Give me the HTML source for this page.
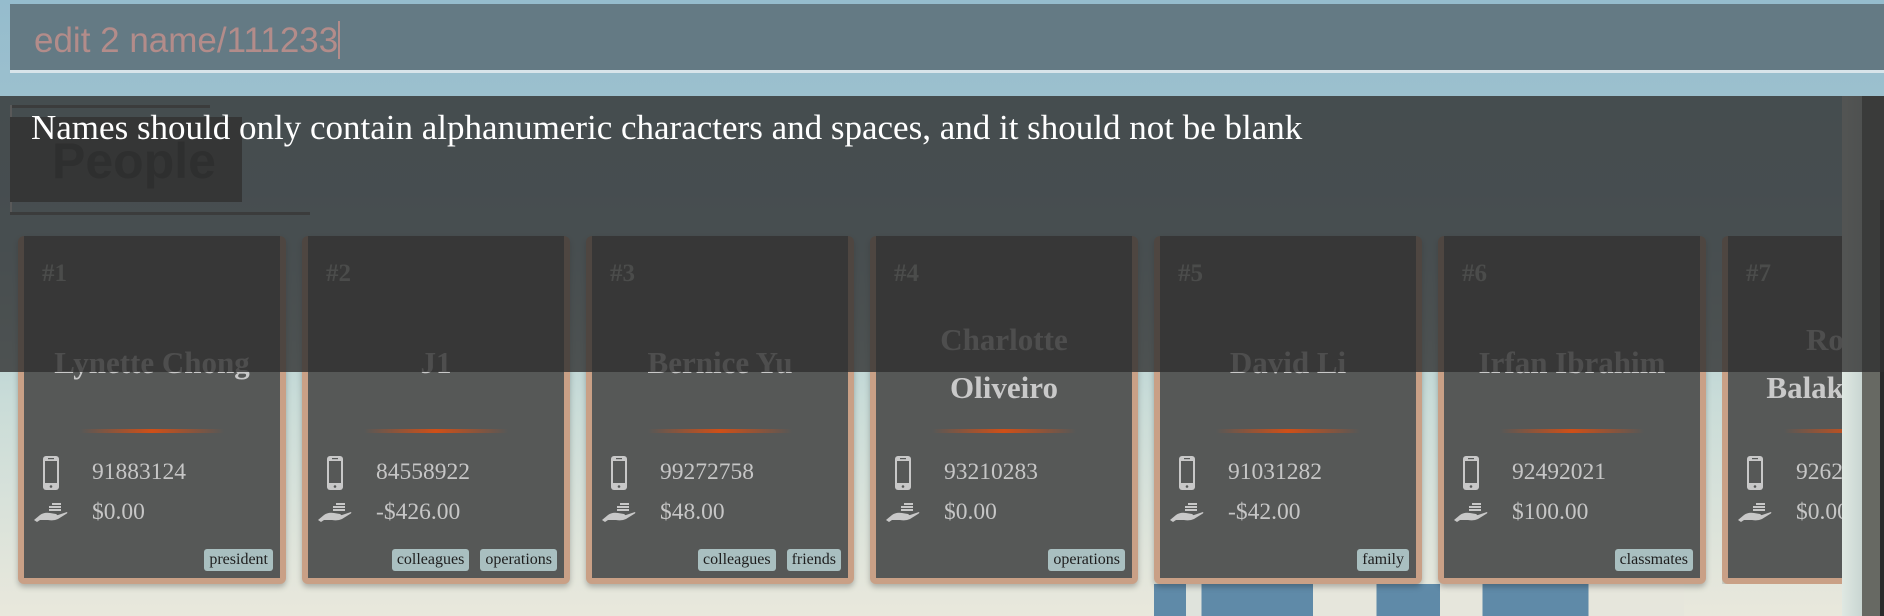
<!DOCTYPE html>
<html><head><meta charset="utf-8"><style>
*{margin:0;padding:0;box-sizing:border-box}
body{width:1884px;height:616px;overflow:hidden;position:relative;background:linear-gradient(#95bccd 0%,#a6c6cf 40%,#c9dcd8 65%,#e9e8dc 100%);font-family:"Liberation Serif",serif}
.abs{position:absolute}
.input{left:10px;top:4px;width:1874px;height:69px;background:#647a84;border-bottom:3px solid #d8e4ea}
.input span{position:absolute;left:24px;top:17px;font:35px "Liberation Sans",sans-serif;color:#b38c8a}
.input i{display:inline-block;width:2px;height:38px;background:#b38c8a;vertical-align:-7px}
.card{top:236px;width:268px;height:348px;background:#c9a086;border-radius:6px;box-shadow:0 3px 6px rgba(0,0,0,.25)}
.inner{position:absolute;left:6px;top:0;right:6px;bottom:6px;background:#565857}
.num{position:absolute;left:19px;top:260px;font:bold 25px "Liberation Serif",serif;color:#4b4c4b}
.name{position:absolute;left:0;width:100%;text-align:center;font:bold 31px "Liberation Serif",serif;color:#c9c9c9;line-height:48px;white-space:nowrap}
.line{position:absolute;top:193px;left:50%;margin-left:-72px;width:144px;height:4px;background:linear-gradient(90deg,rgba(200,70,20,0),#d04f17 50%,rgba(200,70,20,0))}
.ph{position:absolute;left:18px;top:219px}
.mo{position:absolute;left:10px;top:267px}
.t{position:absolute;left:68px;font-size:23.5px;color:#c6c6c6}
.tags{position:absolute;right:7px;top:313px;display:flex;gap:11px}
.tag{background:#a9bfc0;color:#1e1e1e;font-size:16px;padding:1px 5px 2px;border-radius:3px;height:22px;line-height:20px}
.ov{left:0;top:96px;width:1884px;height:276px;background:rgba(48,48,48,.8)}
.msg{left:31px;top:108px;font-size:35px;color:#fff;white-space:nowrap}
</style></head><body>
<div class="abs input"><span>edit 2 name/111233<i></i></span></div>
<div class="abs" style="left:1154px;top:584px;width:530px;height:32px;background:linear-gradient(90deg,#5f8aa8 0 6%,#dfe3dc 6% 9%,#5f8aa8 9% 30%,#e6e6dc 30% 42%,#5f8aa8 42% 54%,#e6e6dc 54% 62%,#5f8aa8 62% 82%,#e6e6dc 82%)"></div>
<div class="abs" style="left:10px;top:105px;width:200px;height:3px;background:#6b7070"></div>
<div class="abs" style="left:10px;top:105px;width:2px;height:110px;background:#fff"></div>
<div class="abs" style="left:10px;top:117px;width:232px;height:85px;background:#4d4f4f"></div>
<div class="abs" style="left:52px;top:132px;font:bold 50px 'Liberation Sans',sans-serif;color:#2b2d2d">People</div>
<div class="abs" style="left:10px;top:212px;width:300px;height:3px;background:#6b7070"></div>

<svg width="0" height="0" style="position:absolute"><defs>
<symbol id="phone" viewBox="0 0 18 36"><rect x="1" y="1" width="16" height="34" rx="3" fill="#c8c8c8"/><rect x="3" y="6" width="12" height="22" fill="#565857"/><rect x="6" y="3" width="6" height="1.2" fill="#565857"/><circle cx="9" cy="31.5" r="1.3" fill="#565857"/></symbol>
<symbol id="hand" viewBox="0 0 34 20"><path d="M0 17 L6 12 Q10 9 16 10 L22 11 Q24 12 22 13 L15 13 L24 12 L33 9 Q34 10 32 11 L24 16 Q20 18 14 17 L6 17 L3 19 Z" fill="#c8c8c8"/><rect x="18" y="0" width="9" height="2" fill="#c8c8c8"/><rect x="15" y="3" width="12" height="2" fill="#c8c8c8"/><rect x="15" y="6" width="12" height="2" fill="#c8c8c8"/></symbol>
</defs></svg>

<div class="abs card" style="left:18px"><div class="inner"><div class="name" style="top:103px">Lynette Chong</div><div class="line"></div><svg class="ph" width="18" height="36"><use href="#phone"/></svg><div class="t" style="top:223px">91883124</div><svg class="mo" width="34" height="20"><use href="#hand"/></svg><div class="t" style="top:263px">$0.00</div><div class="tags"><span class="tag">president</span></div></div></div>
<div class="abs card" style="left:302px"><div class="inner"><div class="name" style="top:103px">J1</div><div class="line"></div><svg class="ph" width="18" height="36"><use href="#phone"/></svg><div class="t" style="top:223px">84558922</div><svg class="mo" width="34" height="20"><use href="#hand"/></svg><div class="t" style="top:263px">-$426.00</div><div class="tags"><span class="tag">colleagues</span><span class="tag">operations</span></div></div></div>
<div class="abs card" style="left:586px"><div class="inner"><div class="name" style="top:103px">Bernice Yu</div><div class="line"></div><svg class="ph" width="18" height="36"><use href="#phone"/></svg><div class="t" style="top:223px">99272758</div><svg class="mo" width="34" height="20"><use href="#hand"/></svg><div class="t" style="top:263px">$48.00</div><div class="tags"><span class="tag">colleagues</span><span class="tag">friends</span></div></div></div>
<div class="abs card" style="left:870px"><div class="inner"><div class="name" style="top:80px">Charlotte<br>Oliveiro</div><div class="line"></div><svg class="ph" width="18" height="36"><use href="#phone"/></svg><div class="t" style="top:223px">93210283</div><svg class="mo" width="34" height="20"><use href="#hand"/></svg><div class="t" style="top:263px">$0.00</div><div class="tags"><span class="tag">operations</span></div></div></div>
<div class="abs card" style="left:1154px"><div class="inner"><div class="name" style="top:103px">David Li</div><div class="line"></div><svg class="ph" width="18" height="36"><use href="#phone"/></svg><div class="t" style="top:223px">91031282</div><svg class="mo" width="34" height="20"><use href="#hand"/></svg><div class="t" style="top:263px">-$42.00</div><div class="tags"><span class="tag">family</span></div></div></div>
<div class="abs card" style="left:1438px"><div class="inner"><div class="name" style="top:103px">Irfan Ibrahim</div><div class="line"></div><svg class="ph" width="18" height="36"><use href="#phone"/></svg><div class="t" style="top:223px">92492021</div><svg class="mo" width="34" height="20"><use href="#hand"/></svg><div class="t" style="top:263px">$100.00</div><div class="tags"><span class="tag">classmates</span></div></div></div>
<div class="abs" style="left:1722px;top:236px;width:120px;height:348px;overflow:hidden"><div class="abs card" style="left:0;top:0"><div class="inner"><div class="name" style="top:80px">Roshan<br>Balakrishnan</div><div class="line"></div><svg class="ph" width="18" height="36"><use href="#phone"/></svg><div class="t" style="top:223px">92624417</div><svg class="mo" width="34" height="20"><use href="#hand"/></svg><div class="t" style="top:263px">$0.00</div></div></div></div>
<div class="abs" style="left:1842px;top:96px;width:20px;height:520px;background:linear-gradient(90deg,#dfe8e2,#c9d6d2)"></div>
<div class="abs" style="left:1862px;top:96px;width:22px;height:520px;background:#676963"></div>
<div class="abs" style="left:1880px;top:200px;width:4px;height:416px;background:#2a2a2a"></div>

<div class="abs ov"></div>
<div class="abs num" style="left:42px;top:260px">#1</div>
<div class="abs num" style="left:326px;top:260px">#2</div>
<div class="abs num" style="left:610px;top:260px">#3</div>
<div class="abs num" style="left:894px;top:260px">#4</div>
<div class="abs num" style="left:1178px;top:260px">#5</div>
<div class="abs num" style="left:1462px;top:260px">#6</div>
<div class="abs num" style="left:1746px;top:260px">#7</div>
<div class="abs msg">Names should only contain alphanumeric characters and spaces, and it should not be blank</div>
</body></html>
